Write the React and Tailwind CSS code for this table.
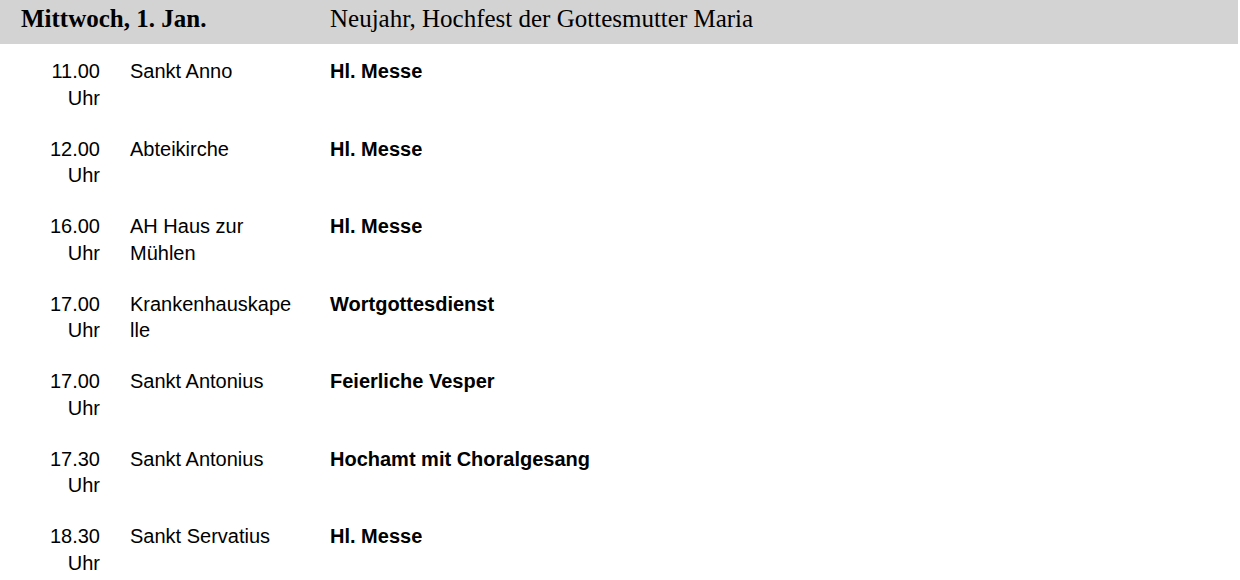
import React from "react";

const rows = [
  { time: "11.00", place: "Sankt Anno", event: "Hl. Messe" },
  { time: "12.00", place: "Abteikirche", event: "Hl. Messe" },
  { time: "16.00", place: "AH Haus zur Mühlen", event: "Hl. Messe" },
  { time: "17.00", place: "Krankenhauskapelle", event: "Wortgottesdienst" },
  { time: "17.00", place: "Sankt Antonius", event: "Feierliche Vesper" },
  { time: "17.30", place: "Sankt Antonius", event: "Hochamt mit Choralgesang" },
  { time: "18.30", place: "Sankt Servatius", event: "Hl. Messe" },
];

export default function App() {
  return (
    <div className="w-[1240px] h-[580px] bg-white overflow-hidden text-black">
      <div className="w-[1238px] h-[44px] bg-[#d3d3d3] flex pt-[5px] font-['Liberation_Serif',serif] text-[25px] leading-[28px]">
        <div className="w-[330px] pl-[21px] font-bold">Mittwoch, 1. Jan.</div>
        <div>Neujahr, Hochfest der Gottesmutter Maria</div>
      </div>
      <div className="font-['Liberation_Sans',Arial,sans-serif] text-[20px] leading-[26.5px]">
        {rows.map((r, i) => (
          <div key={i} className="flex pt-[14px] pb-[10.5px]">
            <div className="w-[100px] text-right">
              <div>{r.time}</div>
              <div>Uhr</div>
            </div>
            <div className="w-[230px] pl-[30px] pr-[37px] break-words">{r.place}</div>
            <div className="font-bold">{r.event}</div>
          </div>
        ))}
      </div>
    </div>
  );
}
